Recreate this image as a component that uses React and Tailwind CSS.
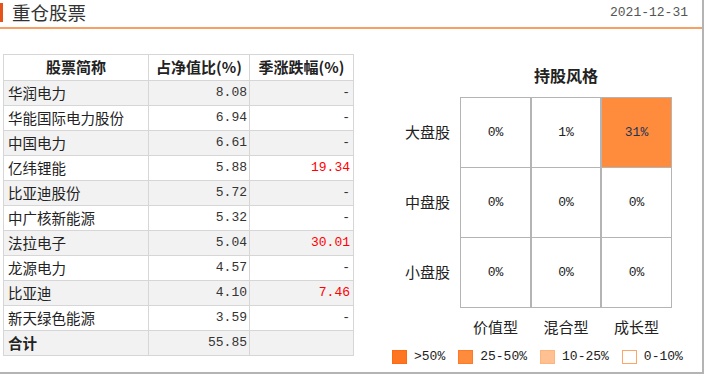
import React from "react";

const rows = [
  { name: "华润电力", ratio: "8.08", change: "-" },
  { name: "华能国际电力股份", ratio: "6.94", change: "-" },
  { name: "中国电力", ratio: "6.61", change: "-" },
  { name: "亿纬锂能", ratio: "5.88", change: "19.34", up: true },
  { name: "比亚迪股份", ratio: "5.72", change: "-" },
  { name: "中广核新能源", ratio: "5.32", change: "-" },
  { name: "法拉电子", ratio: "5.04", change: "30.01", up: true },
  { name: "龙源电力", ratio: "4.57", change: "-" },
  { name: "比亚迪", ratio: "4.10", change: "7.46", up: true },
  { name: "新天绿色能源", ratio: "3.59", change: "-" },
];

const styleGrid = [
  { label: "大盘股", cells: ["0%", "1%", "31%"] },
  { label: "中盘股", cells: ["0%", "0%", "0%"] },
  { label: "小盘股", cells: ["0%", "0%", "0%"] },
];

const cellWidths = ["w-[71px]", "w-[70px]", "w-[71px]"];

const legend = [
  { text: ">50%", box: "bg-[#ff7622] border-[#ff6a10]" },
  { text: "25-50%", box: "bg-[#ff8c3c] border-[#ff7a26]" },
  { text: "10-25%", box: "bg-[#ffc092] border-[#ffb47e]" },
  { text: "0-10%", box: "bg-white border-[#ffa566]" },
];

const cjk = "font-['Noto_Sans_CJK_SC',sans-serif]";
const mono = "font-['Liberation_Mono',monospace]";

const App = () => {
  return (
    <div className={`w-[704px] h-[374px] bg-white border-r-2 border-b-2 border-[#b4b4b4] text-[#222] ${cjk}`}>
      {/* header */}
      <div className="h-[29px] flex items-center border-b-2 border-[#f8a064]">
        <div className="w-[3px] h-[19px] bg-[#e5531c] -mt-[2px]"></div>
        <h1 className="ml-[9px] text-[18.5px] leading-[24px] text-[#333] -mt-[3px]">重仓股票</h1>
        <span className={`ml-auto mr-[14px] text-[13px] text-[#555] -mt-[2px] ${mono}`}>2021-12-31</span>
      </div>

      <div className="flex">
        {/* holdings table */}
        <table className="ml-[3px] mt-[25px] border-collapse text-[14.5px] self-start">
          <thead>
            <tr className="h-[26px] bg-white">
              <th className="w-[145px] border border-[#d6d6d6] font-bold text-[15px] text-[#222] p-0">股票简称</th>
              <th className="w-[101px] border border-[#d6d6d6] font-bold text-[15px] text-[#222] p-0">占净值比(%)</th>
              <th className="w-[104px] border border-[#d6d6d6] font-bold text-[15px] text-[#222] p-0">季涨跌幅(%)</th>
            </tr>
          </thead>
          <tbody>
            {rows.map((row, i) => (
              <tr key={row.name} className={`h-[25px] ${i % 2 === 0 ? "bg-[#f2f2f2]" : "bg-white"}`}>
                <td className="border border-[#d6d6d6] pl-[4px] py-0 leading-[24px]">{row.name}</td>
                <td className={`border border-[#d6d6d6] text-right pr-[2px] py-0 text-[13px] text-[#333] ${mono}`}>{row.ratio}</td>
                <td className={`border border-[#d6d6d6] text-right pr-[3px] py-0 text-[13px] ${mono} ${row.up ? "text-[#f00]" : "text-[#333]"}`}>
                  {row.change}
                </td>
              </tr>
            ))}
            <tr className="h-[25px] bg-[#f2f2f2]">
              <td className="border border-[#d6d6d6] pl-[4px] py-0 font-bold leading-[24px]">合计</td>
              <td className={`border border-[#d6d6d6] text-right pr-[2px] py-0 text-[13px] text-[#333] ${mono}`}>55.85</td>
              <td className="border border-[#d6d6d6] py-0"></td>
            </tr>
          </tbody>
        </table>

        {/* style box */}
        <div className="flex flex-col">
          <div className="ml-[106px] w-[212px] mt-[36px] text-center font-bold text-[16px] leading-[20px] text-[#222]">
            持股风格
          </div>
          <div className="mt-[12px] flex flex-col">
            {styleGrid.map((r, ri) => (
              <div key={r.label} className={`flex items-center ${ri > 0 ? "-mt-px" : ""}`}>
                <div className="w-[96px] mr-[10px] text-right text-[15px] text-[#222]">{r.label}</div>
                {r.cells.map((c, ci) => (
                  <div
                    key={ci}
                    className={`${cellWidths[ci]} h-[71px] border border-[#b4b4b4] flex items-center justify-center text-[13px] ${mono} ${
                      c === "31%" ? "bg-[#ff8c3c] text-[#1d3557]" : "bg-white text-[#222]"
                    }`}
                  >
                    {c}
                  </div>
                ))}
              </div>
            ))}
          </div>
          <div className="flex ml-[106px] mt-[9px] text-[15px] leading-[20px] text-[#222]">
            {["价值型", "混合型", "成长型"].map((t, i) => (
              <div key={t} className={`${cellWidths[i]} text-center`}>{t}</div>
            ))}
          </div>
          <div className="flex items-center ml-[38px] mt-[10px] gap-[13px]">
            {legend.map((l) => (
              <div key={l.text} className="flex items-center gap-[7px]">
                <span className={`w-[15px] h-[14px] border ${l.box}`}></span>
                <span className={`text-[13px] text-[#222] ${mono}`}>{l.text}</span>
              </div>
            ))}
          </div>
        </div>
      </div>
    </div>
  );
};

export default App;
